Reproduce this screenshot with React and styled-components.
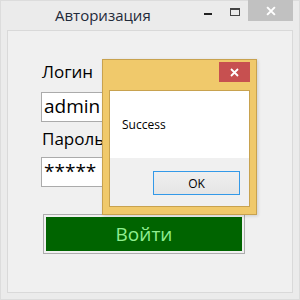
import styled, { createGlobalStyle } from "styled-components";

const Global = createGlobalStyle`
  html, body {
    margin: 0;
    padding: 0;
    background: #e9e9e9;
  }
`;

const Window = styled.div`
  width: 300px;
  height: 300px;
  box-sizing: border-box;
  background: #ebebeb;
  border: 1px solid #dcdcdc;
  display: flex;
  flex-direction: column;
  position: relative;
  font-family: "Open Sans", "Liberation Sans", sans-serif;
`;

const TitleBar = styled.div`
  height: 29px;
  display: flex;
  align-items: flex-start;
  position: relative;
`;

const Caption = styled.div`
  padding-left: 54px;
  padding-top: 4px;
  font-size: 15px;
  color: #1f2a3a;
  flex: 1;
`;

const Controls = styled.div`
  display: flex;
  align-items: flex-start;
  margin-right: 6px;
  margin-top: -1px;
`;

const Ctrl = styled.div`
  width: ${({ w }) => w}px;
  height: 21px;
  display: flex;
  align-items: center;
  justify-content: center;
  padding-top: ${({ drop }) => drop || 0}px;
  box-sizing: border-box;
  background: ${({ close }) => (close ? "#c1c1c1" : "transparent")};
`;

const Client = styled.div`
  flex: 1;
  margin: 0 6px 6px 6px;
  border: 1px solid #d9d9d9;
  background: #f0f0f0;
  padding: 30px 0 0 33px;
  display: flex;
  flex-direction: column;
  align-items: flex-start;
`;

const Label = styled.div`
  font-size: 17px;
  line-height: 22px;
  color: #000;
  margin-left: 1px;
  margin-top: ${({ top }) => top}px;
`;

const Input = styled.div`
  width: 200px;
  height: 30px;
  box-sizing: border-box;
  border: 1px solid #ababab;
  background: #fff;
  font-size: 19px;
  line-height: 26px;
  padding-left: 2px;
  color: #000;
  margin-top: ${({ top }) => top}px;
`;

const Button = styled.div`
  margin-top: 27px;
  margin-left: 2px;
  width: 202px;
  height: 40px;
  box-sizing: border-box;
  border: 1px solid #adadad;
  padding: 2px;
  background: #f0f0f0;
`;

const ButtonFace = styled.div`
  height: 100%;
  background: #006400;
  color: #90ee90;
  font-size: 19px;
  display: flex;
  align-items: center;
  justify-content: center;
`;

const Dialog = styled.div`
  position: absolute;
  left: 101px;
  top: 58px;
  width: 155px;
  height: 156px;
  box-sizing: border-box;
  background: #f0c96b;
  border: 1px solid #c8a24f;
  box-shadow: 1px 1px 3px rgba(0, 0, 0, 0.15);
  display: flex;
  flex-direction: column;
`;

const DialogTitle = styled.div`
  height: 30px;
  display: flex;
  justify-content: flex-end;
  align-items: flex-start;
  padding: 2px 6px 0 0;
  box-sizing: border-box;
`;

const DialogClose = styled.div`
  width: 31px;
  height: 20px;
  background: #c75050;
  display: flex;
  align-items: center;
  justify-content: center;
`;

const DialogBody = styled.div`
  flex: 1;
  margin: 0 6px 7px 6px;
  border: 1px solid #c8a24f;
  display: flex;
  flex-direction: column;
  background: #f0f0f0;
`;

const Message = styled.div`
  background: #fff;
  height: 67px;
  padding-left: 12px;
  box-sizing: border-box;
  display: flex;
  align-items: center;
  font-size: 12px;
  color: #000;
`;

const Footer = styled.div`
  flex: 1;
  display: flex;
  justify-content: flex-end;
  align-items: flex-start;
  padding: 13px 9px 0 0;
`;

const OkButton = styled.div`
  width: 87px;
  height: 24px;
  box-sizing: border-box;
  border: 1px solid #3399e8;
  background: linear-gradient(#efefef, #e5e5e5);
  font-size: 12px;
  display: flex;
  align-items: center;
  justify-content: center;
  color: #000;
`;

const X = ({ color = "#fff", size = 9 }) => (
  <svg width={size} height={size} viewBox="0 0 9 9">
    <path d="M1 1 L8 8 M8 1 L1 8" stroke={color} strokeWidth="1.8" />
  </svg>
);

export default function App() {
  return (
    <>
      <Global />
      <Window>
        <TitleBar>
          <Caption>Авторизация</Caption>
          <Controls>
            <Ctrl w={26} drop={4}>
              <svg width="9" height="10" viewBox="0 0 9 10">
                <rect x="0" y="5" width="8" height="2" fill="#222" />
              </svg>
            </Ctrl>
            <Ctrl w={27} drop={2}>
              <svg width="10" height="8" viewBox="0 0 10 8">
                <rect x="0.5" y="0.5" width="9" height="7" fill="none" stroke="#444" />
                <rect x="0" y="0" width="10" height="2" fill="#444" />
              </svg>
            </Ctrl>
            <Ctrl w={45} close>
              <X size={10} />
            </Ctrl>
          </Controls>
        </TitleBar>
        <Client>
          <Label top={0}>Логин</Label>
          <Input top={9}>admin</Input>
          <Label top={6}>Пароль</Label>
          <Input top={7}>*****</Input>
          <Button>
            <ButtonFace>Войти</ButtonFace>
          </Button>
        </Client>
        <Dialog>
          <DialogTitle>
            <DialogClose>
              <X size={9} />
            </DialogClose>
          </DialogTitle>
          <DialogBody>
            <Message>Success</Message>
            <Footer>
              <OkButton>OK</OkButton>
            </Footer>
          </DialogBody>
        </Dialog>
      </Window>
    </>
  );
}
